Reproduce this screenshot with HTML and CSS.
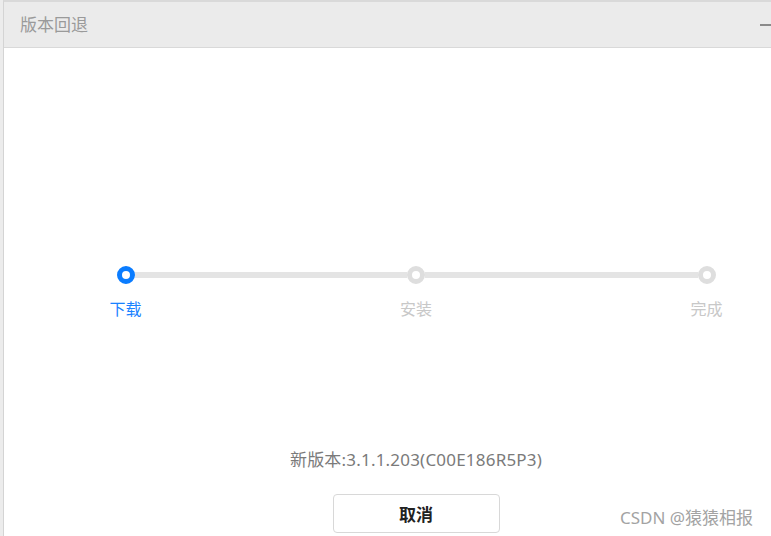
FILE: index.html
```html
<!DOCTYPE html>
<html lang="zh-CN">
<head>
<meta charset="utf-8">
<title>版本回退</title>
<link rel="stylesheet" href="styles.css">
</head>
<body>
<div class="page">
  <div class="window">
    <div class="header">
      <span class="title">版本回退</span>
      <span class="min-btn" aria-label="最小化"></span>
    </div>
    <div class="content">
      <div class="steps">
        <div class="step active">
          <span class="dot"></span>
          <span class="label">下载</span>
        </div>
        <span class="line"></span>
        <div class="step">
          <span class="dot"></span>
          <span class="label">安装</span>
        </div>
        <span class="line"></span>
        <div class="step">
          <span class="dot"></span>
          <span class="label">完成</span>
        </div>
      </div>
      <div class="version">新版本:3.1.1.203(C00E186R5P3)</div>
      <button class="cancel">取消</button>
    </div>
  </div>
  <div class="watermark">CSDN @猿猿相报</div>
</div>
</body>
</html>
```
FILE: styles.css
```css
html, body {
  margin: 0;
  padding: 0;
  width: 771px;
  height: 536px;
  overflow: hidden;
  background: #ececec;
  font-family: "Noto Sans", "Noto Sans CJK SC", sans-serif;
}
.page {
  position: relative;
  width: 771px;
  height: 536px;
  padding-left: 3px;
  box-sizing: border-box;
  overflow: hidden;
}
.window {
  width: 768px;
  height: 536px;
  background: #ffffff;
  border-top: 2px solid #d9d9d9;
  border-left: 1px solid #d4d4d4;
  box-sizing: border-box;
}
.header {
  height: 46px;
  background: #ebebeb;
  border-bottom: 1px solid #d9d9d9;
  display: flex;
  align-items: center;
  justify-content: space-between;
  padding-left: 16px;
  box-sizing: border-box;
}
.title {
  font-size: 17px;
  color: #9a9a9a;
  line-height: 22px;
}
.min-btn {
  width: 11px;
  height: 2px;
  background: #8a8a8a;
}
.content {
  display: flex;
  flex-direction: column;
  align-items: center;
  padding-top: 218px;
  padding-left: 57px;
}
.steps {
  width: 599px;
  display: flex;
  align-items: flex-start;
}
.step {
  width: 18px;
  display: flex;
  flex-direction: column;
  align-items: center;
}
.dot {
  width: 18px;
  height: 18px;
  box-sizing: border-box;
  border: 5px solid #dedede;
  border-radius: 50%;
  background: #ffffff;
}
.step.active .dot {
  border-color: #0a7cff;
}
.label {
  margin-top: 15px;
  font-size: 16px;
  line-height: 20px;
  white-space: nowrap;
  color: #c8c8c8;
}
.step.active .label {
  color: #1a82ff;
}
.line {
  flex: 1;
  height: 6px;
  margin-top: 6px;
  background: #e4e4e4;
}
.version {
  margin-top: 130px;
  font-size: 17px;
  letter-spacing: 0.2px;
  line-height: 22px;
  color: #7a7a7a;
}
.cancel {
  margin-top: 23px;
  width: 167px;
  height: 39px;
  background: #ffffff;
  border: 1px solid #d8d8d8;
  border-radius: 4px;
  font-family: "Noto Sans CJK SC", sans-serif;
  font-size: 17px;
  font-weight: bold;
  color: #222222;
  padding: 0;
}
.watermark {
  position: absolute;
  left: 620px;
  top: 507px;
  font-size: 17px;
  line-height: 22px;
  color: #a3a3a3;
  white-space: nowrap;
}
```
